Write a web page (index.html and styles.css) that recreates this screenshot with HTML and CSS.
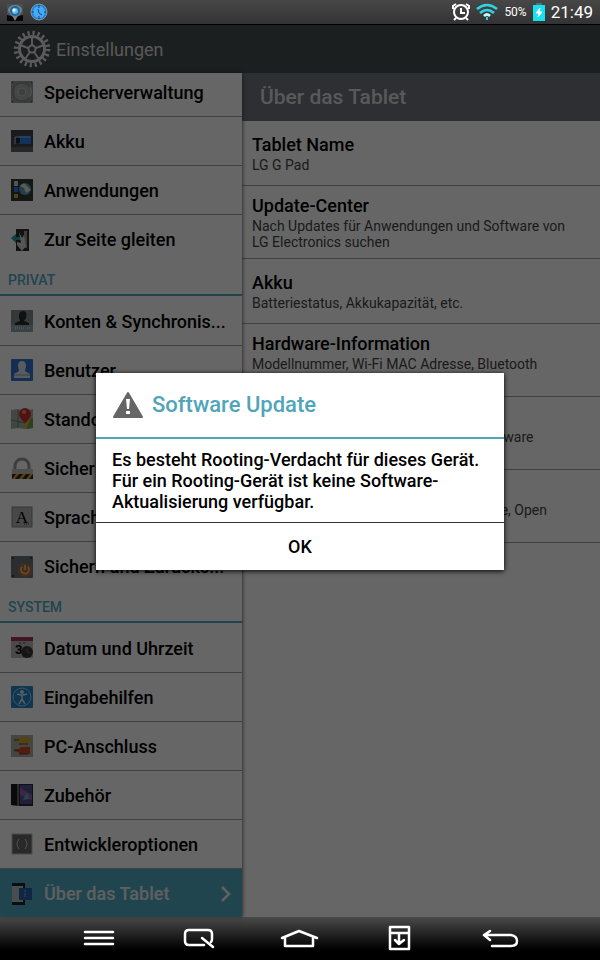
FILE: index.html
```
<!DOCTYPE html>
<html lang="de">
<head>
    <meta charset="utf-8">
    <meta name="viewport" content="width=device-width, initial-scale=1">
    <title>Einstellungen</title>
    <link rel="stylesheet" href="styles.css">
</head>
<body>
    <div class="statusbar">
        <svg class="status-icon" viewBox="0 0 18 18">
            <rect x="1" y="1" width="16" height="15" fill="#4b4e50"/>
            <path d="M1 18v-6l5 1 3 4 3-4 5-1v6z" fill="#050505"/>
            <path d="M2 7a7 5 0 0 1 14 0q0 3-5 7l-2 4-2-4q-5-4-5-7z" fill="#77818a"/>
            <circle cx="9" cy="8" r="5" fill="#17689f"/>
            <circle cx="9" cy="8" r="3" fill="#63bdf0"/>
            <circle cx="8" cy="7" r="1.500" fill="#fff"/>
        </svg>
        <svg class="status-icon" viewBox="0 0 18 18">
            <circle cx="9" cy="9" r="8" fill="#2384d8" stroke="#81949f"/>
            <circle cx="9" cy="9" r="6" fill="#46aaf4"/>
            <path d="M9 2v3M9 13v3M2 9h2M14 9h2M8 6l1 4 3 2" fill="none" stroke="#124776"/>
        </svg>
        <span class="spacer"></span>
        <svg class="status-icon" viewBox="0 0 18 18" fill="none" stroke="#fff" stroke-width="2">
            <circle cx="9" cy="9" r="7"/>
            <path d="M9 5v5h4M1 6V3l3-2M17 6V3l-3-2M4 15l-2 2M14 15l2 2"/>
        </svg>
        <svg class="wifi-icon" viewBox="0 0 22 18" fill="none" stroke="#2fd3e2" stroke-width="2.600">
            <path d="M1 6q10-8 20 0M4 10q7-6 14 0"/>
            <path d="M8 13q3-3 6 0" stroke="#c8f6fa"/>
            <path d="M11 14v3" stroke-width="2"/>
        </svg>
        <span class="battery-level">50%</span>
        <svg class="battery-icon" viewBox="0 0 12 20">
            <path d="M3 1h6v2H3z" fill="#47777b"/>
            <path d="M0 3h12v16H0z" fill="#18e0ee"/>
            <path d="M7 6l-4 5h3l-1 4 4-5H6z" fill="#fff" stroke="#fff"/>
        </svg>
        <span class="clock">21:49</span>
    </div>

    <div class="screen">
        <header class="appbar">
            <svg class="gear" viewBox="0 0 38 38" fill="none" stroke="#e4e4e4">
                <circle cx="19" cy="19" r="16" stroke-width="4.500" stroke-dasharray="2.200 2.827"/>
                <circle cx="19" cy="19" r="12.500" stroke-width="3"/>
                <circle cx="19" cy="19" r="3.500" stroke-width="2"/>
                <path d="M19 15V7M23 18l8-3M21 22l5 7M17 22l-5 7M15 18l-8-3" stroke-width="2"/>
            </svg>
            <h1>Einstellungen</h1>
        </header>

        <div class="panes">
            <nav class="sidebar">
                <div class="list first-list">
                    <a class="item" href="#">
                        <svg viewBox="0 0 22 22">
                            <rect width="22" height="22" rx="1" fill="#929896"/>
                            <circle cx="11" cy="11" r="9" fill="#a9afad" stroke="#7c8280"/>
                            <circle cx="11" cy="11" r="4" fill="#9a9f9d" stroke="#c4c8c6"/>
                            <path d="M19 6q3 6-1 10" fill="none" stroke="#e4e4e4"/>
                            <path d="M1 1h1v1H1zM20 1h1v1h-1zM1 20h1v1H1zM20 20h1v1h-1z" fill="#444"/>
                        </svg>
                        <span>Speicherverwaltung</span>
                    </a>
                    <a class="item" href="#">
                        <svg viewBox="0 0 22 22">
                            <rect width="22" height="22" fill="#40454a"/>
                            <path d="M0 17h22v5H0z" fill="#5c6266"/>
                            <path d="M8 6h12v8H8z" fill="#2a7de4"/>
                            <path d="M4 14V7h15" fill="none" stroke="#a9c4dc"/>
                            <path d="M5 8h4v5H5z" fill="#1f2a38"/>
                        </svg>
                        <span>Akku</span>
                    </a>
                    <a class="item" href="#">
                        <svg viewBox="0 0 22 22">
                            <rect width="22" height="22" fill="#343b33"/>
                            <path d="M3 2h4v5H3z" fill="#bdd"/>
                            <path d="M3 8h4v5H3z" fill="#237ee8"/>
                            <path d="M3 15h4v4H3z" fill="#bba638"/>
                            <circle cx="14" cy="10" r="6" fill="#5d9db8"/>
                            <path d="M9 7q4-5 7 0l4 4-5 3-2-5z" fill="#dde7e7"/>
                        </svg>
                        <span>Anwendungen</span>
                    </a>
                    <a class="item" href="#">
                        <svg viewBox="0 0 22 22">
                            <path d="M5 0h13v22H5z" fill="#2c2f2f"/>
                            <path d="M13 2h3v17h-3z" fill="#999"/>
                            <path d="M0 9l5-4v3h5v3H5v3z" fill="#259da5"/>
                            <path d="M8 3l3 6 2-3 2 11-4 5-5-6 0-3 4 1z" fill="#d6d6d0"/>
                        </svg>
                        <span>Zur Seite gleiten</span>
                    </a>
                </div>
                <h2 class="section">PRIVAT</h2>
                <div class="list">
                    <a class="item" href="#">
                        <svg viewBox="0 0 22 22">
                            <rect width="22" height="22" fill="#7f8e92"/>
                            <path d="M8 8q-1-7 4-7t3 7l-2 3 5 2v3H4v-3l5-2z" fill="#292d2e"/>
                            <path d="M0 15h22v7H0z" fill="#8fa5ac"/>
                            <path d="M4 18h10M16 18h3" stroke="#fff" stroke-dasharray="1 1"/>
                        </svg>
                        <span>Konten &amp; Synchronis...</span>
                    </a>
                    <a class="item" href="#">
                        <svg viewBox="0 0 22 22">
                            <rect width="22" height="22" rx="1" fill="#3476ca"/>
                            <path d="M7 7q0-5 4-5t4 5l-1 5 5 3v4H3v-4l5-3z" fill="#dce6ed"/>
                            <path d="M3 16h16" stroke="#84a6c4"/>
                        </svg>
                        <span>Benutzer</span>
                    </a>
                    <a class="item" href="#">
                        <svg viewBox="0 0 22 22">
                            <path d="M0 2l7-1 7 2 8-2v19l-8 1-7-1-7 1z" fill="#a9b1a5"/>
                            <path d="M7 2v18M0 12l14 3" stroke="#648268"/>
                            <path d="M15 13l7-3v10l-6 1z" fill="#64a546"/>
                            <path d="M14 20l4-9" stroke="#e2a346" stroke-width="3"/>
                            <path d="M14 15q-6-5-6-9a6 6 0 0 1 12 0q0 4-6 9z" fill="#cc2f28"/>
                            <circle cx="13" cy="4" r="2" fill="#f08a7a"/>
                        </svg>
                        <span>Standort</span>
                    </a>
                    <a class="item" href="#">
                        <svg viewBox="0 0 22 22">
                            <path d="M4 14V9a7 7 0 0 1 14 0v5" fill="none" stroke="#999" stroke-width="3"/>
                            <path d="M1 12h21v5H1z" fill="#c4c4c4"/>
                            <path d="M1 17h21v5H1z" fill="#31291d"/>
                            <path d="M1 22l4-5h3l-4 5zM8 22l4-5h3l-4 5zM15 22l4-5h3l-4 5z" fill="#daa133"/>
                        </svg>
                        <span>Sicherheit</span>
                    </a>
                    <a class="item" href="#">
                        <svg viewBox="0 0 22 22">
                            <rect x="1" y="1" width="20" height="20" fill="#b4b4b4" stroke="#888"/>
                            <text class="letter" x="11" y="17" text-anchor="middle">A</text>
                            <path d="M13 18h6" stroke="#333" stroke-dasharray="1 1"/>
                        </svg>
                        <span>Sprache &amp; Eingabe</span>
                    </a>
                    <a class="item" href="#">
                        <svg viewBox="0 0 22 22">
                            <rect width="22" height="22" rx="1" fill="#6c7478"/>
                            <path d="M1 1h2v2H1zM19 1h2v2h-2zM1 19h2v2H1z" fill="#383e41"/>
                            <circle cx="14" cy="14" r="7" fill="#ad7048"/>
                            <path d="M11 11a4 4 0 1 0 6 0M14 9v5" fill="none" stroke="#ffbe88" stroke-width="1.500"/>
                        </svg>
                        <span>Sichern und Zurücks...</span>
                    </a>
                </div>
                <h2 class="section">SYSTEM</h2>
                <div class="list">
                    <a class="item" href="#">
                        <svg viewBox="0 0 22 22">
                            <path d="M0 0h22v21H0z" fill="#b8b8b8"/>
                            <path d="M0 0h22v4H0z" fill="#a83656"/>
                            <path d="M8 6h2M12 6h2" stroke="#333"/>
                            <text class="day" x="4" y="17">3</text>
                            <circle cx="16" cy="15" r="6" fill="#383638"/>
                            <path d="M16 11v4l3 1" fill="none" stroke="#666"/>
                        </svg>
                        <span>Datum und Uhrzeit</span>
                    </a>
                    <a class="item" href="#">
                        <svg viewBox="0 0 22 22">
                            <rect width="22" height="22" rx="1" fill="#2188cd"/>
                            <circle cx="11" cy="11" r="9" fill="none" stroke="#a9d0e9"/>
                            <path d="M6 8l4 1h2l4-1M11 9v5M11 13l-3 5M11 13l3 5" fill="none" stroke="#d6e8f3" stroke-width="1.500"/>
                            <circle cx="11" cy="6" r="2" fill="#d6e8f3"/>
                        </svg>
                        <span>Eingabehilfen</span>
                    </a>
                    <a class="item" href="#">
                        <svg viewBox="0 0 22 22">
                            <rect width="22" height="22" fill="#acaca8"/>
                            <path d="M3 5l5-1 2-2h6l4 3-3 4H9L7 7 3 6z" fill="#d5a927"/>
                            <path d="M3 15l5-1 2-2h9v7H9l-2-2-4-1z" fill="#d54422"/>
                            <path d="M3 5h5M3 15h5M8 9h9M8 19h9" stroke="#4b4938"/>
                        </svg>
                        <span>PC-Anschluss</span>
                    </a>
                    <a class="item" href="#">
                        <svg viewBox="0 0 22 22">
                            <path d="M0 0h7v22l-7-1z" fill="#191a1e"/>
                            <path d="M7 0h15v22H7z" fill="#2a2a2e"/>
                            <path d="M7 0v22" stroke="#aaa"/>
                            <path d="M9 1h12v19H9z" fill="#51528f"/>
                            <path d="M9 4l12 7v5L9 11z" fill="#9466aa"/>
                            <path d="M12 16l4-7 2 6z" fill="#5fadc4"/>
                        </svg>
                        <span>Zubehör</span>
                    </a>
                    <a class="item" href="#">
                        <svg viewBox="0 0 22 22">
                            <rect x="1" y="1" width="20" height="20" fill="#686868" stroke="#bbb"/>
                            <path d="M8 6q-4 5 0 10M14 6q4 5 0 10" fill="none" stroke="#ccc"/>
                        </svg>
                        <span>Entwickleroptionen</span>
                    </a>
                    <a class="item active" href="#">
                        <svg viewBox="0 0 22 22">
                            <path d="M1 0h13v22H1z" fill="#1c2429"/>
                            <path d="M1 3h11v16H1z" fill="#b4c0c3"/>
                            <path d="M8 5h13v12H8z" fill="#2860a8"/>
                            <path d="M14 10v4M14 7v2" stroke="#8db4e4"/>
                        </svg>
                        <span>Über das Tablet</span>
                        <svg class="chevron" viewBox="0 0 10 16" fill="none" stroke="#f0f0f0" stroke-width="2.500">
                            <path d="M1 1l7 7-7 7"/>
                        </svg>
                    </a>
                </div>
            </nav>

            <main class="content">
                <h2 class="content-title">Über das Tablet</h2>
                <div class="row">
                    <h3>Tablet Name</h3>
                    <p>LG G Pad</p>
                </div>
                <div class="row">
                    <h3>Update-Center</h3>
                    <p>Nach Updates für Anwendungen und Software von LG Electronics suchen</p>
                </div>
                <div class="row">
                    <h3>Akku</h3>
                    <p>Batteriestatus, Akkukapazität, etc.</p>
                </div>
                <div class="row">
                    <h3>Hardware-Information</h3>
                    <p>Modellnummer, Wi-Fi MAC Adresse, Bluetooth Adresse, etc.</p>
                </div>
                <div class="row">
                    <h3>Software-Information</h3>
                    <p>Android-Version, Build-Nummer und Software Version, etc.</p>
                </div>
                <div class="row">
                    <h3>Rechtliche Hinweise</h3>
                    <p>LG Lizenz, Google-Rechtshinweise, usage, Open Source, etc.</p>
                </div>
            </main>
        </div>

        <div class="overlay">
            <div class="dialog" role="alertdialog" aria-labelledby="dialogTitle" aria-describedby="dialogText">
                <div class="dialog-title">
                    <svg viewBox="0 0 32 28">
                        <path d="M16 2L30 26H2z" fill="#666" stroke="#666" stroke-width="2" stroke-linejoin="round"/>
                        <path d="M14 8h4l-1 10h-2zM14 20h4v3h-4z" fill="#fff"/>
                    </svg>
                    <h2 id="dialogTitle">Software Update</h2>
                </div>
                <p id="dialogText" class="dialog-text">Es besteht Rooting-Verdacht für dieses Gerät. Für ein Rooting-Gerät ist keine Software-Aktualisierung verfügbar.</p>
                <button class="dialog-button" type="button">OK</button>
            </div>
        </div>
    </div>

    <div class="navbar">
        <button type="button" aria-label="Menü">
            <svg viewBox="0 0 40 28"><path d="M5 7h28M5 13h28M5 19h28"/></svg>
        </button>
        <button type="button" aria-label="QSlide">
            <svg viewBox="0 0 40 28"><path d="M24 20H9q-4 0-4-4V9q0-4 4-4h19q4 0 4 4v5q0 2-1 3M22 13l11 9"/></svg>
        </button>
        <button type="button" aria-label="Startseite">
            <svg viewBox="0 0 40 28"><path d="M2 13L19 6l18 7M5 13v8h28v-8"/></svg>
        </button>
        <button type="button" aria-label="Benachrichtigungen">
            <svg viewBox="0 0 40 28"><path d="M10 2h19v22H10zM10 8h19M19 9v10M15 15l4 4 5-4"/></svg>
        </button>
        <button type="button" aria-label="Zurück">
            <svg viewBox="0 0 40 28"><path d="M10 6l-6 4 6 5M5 10h26q6 1 6 6t-6 5H12"/></svg>
        </button>
    </div>
</body>
</html>
```
FILE: styles.css
```
* {
    box-sizing: border-box;
}
body {
    display: flex;
    flex-direction: column;
    height: 100vh;
    margin: 0;
    overflow: hidden;
    font-family: Roboto, "Liberation Sans", sans-serif;
    color: #000;
}
h1, h2, h3, p {
    margin: 0;
    font-weight: 500;
}
.statusbar {
    display: flex;
    flex: none;
    align-items: center;
    gap: 6px;
    height: 25px;
    padding: 0 7px 0 6px;
    border-bottom: 1px solid #000;
    background: linear-gradient(#474747, #333);
    color: #fff;
}
.status-icon {
    width: 18px;
    height: 18px;
}
.wifi-icon {
    width: 22px;
    height: 18px;
}
.battery-icon {
    width: 12px;
    height: 20px;
}
.spacer {
    flex: 1;
}
.battery-level {
    font-size: 12px;
}
.clock {
    font-size: 17px;
}
.screen {
    position: relative;
    display: flex;
    flex: 1;
    flex-direction: column;
    min-height: 0;
}
.appbar {
    display: flex;
    flex: none;
    align-items: center;
    gap: 5px;
    height: 48px;
    padding-left: 13px;
    background: #464e4e;
    color: #dedede;
}
.appbar h1 {
    font-size: 18px;
    font-weight: 400;
}
.gear {
    width: 38px;
    height: 38px;
}
.panes {
    display: flex;
    flex: 1;
    min-height: 0;
    background: #fff;
}
.sidebar {
    z-index: 1;
    flex: none;
    width: 242px;
    overflow: hidden;
    box-shadow: 0 0 4px #333;
    background: #fff;
}
/* the list is scrolled a little under the app bar */
.first-list {
    margin-top: -5px;
}
.item {
    display: flex;
    align-items: center;
    gap: 11px;
    height: 49px;
    padding: 0 11px;
    border-bottom: 1px solid #a0a0a0;
    color: #000;
    font-size: 18px;
    font-weight: 500;
    text-decoration: none;
    white-space: nowrap;
}
.item:last-child {
    border-bottom: none;
}
.item svg {
    flex: none;
    width: 22px;
    height: 22px;
}
.item span {
    flex: 1;
}
.item .chevron {
    width: 10px;
    height: 16px;
}
.active {
    background: #50adc6;
    color: #f0f0f0;
}
.letter {
    font: 17px "Liberation Serif", serif;
}
.day {
    font: bold 13px Roboto, sans-serif;
}
.section {
    height: 32px;
    margin-bottom: 1px;
    padding: 7px 8px 0;
    border-bottom: 2px solid #50adc6;
    color: #50adc6;
    font-size: 14px;
    line-height: 18px;
}
.content {
    flex: 1;
    min-width: 0;
}
.content-title {
    padding: 0 18px;
    background: #70767f;
    color: #dedede;
    font-size: 21px;
    line-height: 48px;
}
.row {
    display: flex;
    flex-direction: column;
    justify-content: center;
    min-height: 65px;
    padding: 8px 24px 8px 10px;
    border-bottom: 1px solid #a0a0a0;
}
.row h3 {
    font-size: 18px;
    line-height: 24px;
}
.row p {
    color: #444;
    font-size: 14px;
    font-weight: 400;
    line-height: 16px;
}
.overlay {
    position: absolute;
    z-index: 2;
    inset: 0;
    display: flex;
    align-items: center;
    justify-content: center;
    background: rgba(0, 0, 0, 0.6);
}
.dialog {
    width: 68%;
    box-shadow: 0 1px 5px #000;
    background: #fff;
}
.dialog-title {
    display: flex;
    align-items: center;
    gap: 8px;
    height: 66px;
    padding: 0 16px;
    border-bottom: 2px solid #50a5b9;
    color: #50a5b9;
}
.dialog-title svg {
    width: 32px;
    height: 28px;
}
.dialog-title h2 {
    font-size: 22px;
}
.dialog-text {
    padding: 10px 16px;
    border-bottom: 1px solid #333;
    font-size: 18px;
    line-height: 21px;
}
.dialog-button {
    display: block;
    width: 100%;
    height: 47px;
    border: none;
    background: none;
    font: 500 18px Roboto, sans-serif;
}
.navbar {
    display: flex;
    flex: none;
    align-items: center;
    justify-content: center;
    gap: 60px;
    height: 43px;
    background: linear-gradient(#4a4a4a, #000 75%);
}
.navbar button {
    width: 40px;
    height: 28px;
    padding: 0;
    border: none;
    background: none;
}
.navbar svg {
    display: block;
    width: 40px;
    height: 28px;
    fill: none;
    stroke: #fff;
    stroke-width: 2.5px;
    stroke-linecap: round;
    stroke-linejoin: round;
}
```
